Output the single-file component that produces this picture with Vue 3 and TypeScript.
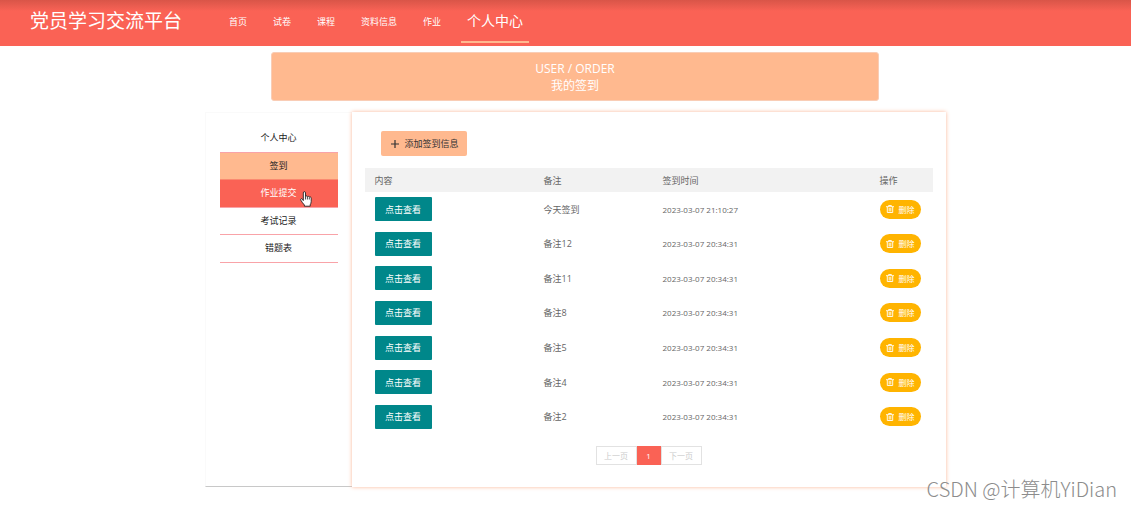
<script setup lang="ts">
import { ref } from 'vue'

interface SignRecord {
  note: string
  time: string
}

const navLinks: string[] = ['首页', '试卷', '课程', '资料信息', '作业', '个人中心']
const activeNav = ref('个人中心')

const menu: string[] = ['个人中心', '签到', '作业提交', '考试记录', '错题表']
const activeMenu = ref('签到')
const hoverMenu = ref('作业提交')

const records = ref<SignRecord[]>([
  { note: '今天签到', time: '2023-03-07 21:10:27' },
  { note: '备注12', time: '2023-03-07 20:34:31' },
  { note: '备注11', time: '2023-03-07 20:34:31' },
  { note: '备注8', time: '2023-03-07 20:34:31' },
  { note: '备注5', time: '2023-03-07 20:34:31' },
  { note: '备注4', time: '2023-03-07 20:34:31' },
  { note: '备注2', time: '2023-03-07 20:34:31' },
])
</script>

<template>
  <div class="page">
    <header class="topbar">
      <div class="brand">党员学习交流平台</div>
      <nav class="topnav">
        <a
          v-for="link in navLinks"
          :key="link"
          href="#"
          :class="{ active: link === activeNav }"
          @click.prevent="activeNav = link"
        >{{ link }}</a>
      </nav>
    </header>

    <div class="content">
      <section class="banner">
        <p>USER / ORDER</p>
        <h1>我的签到</h1>
      </section>

      <div class="columns">
        <aside class="sidebar">
          <nav class="menu">
            <a
              v-for="item in menu"
              :key="item"
              href="#"
              :class="{ active: item === activeMenu, hover: item === hoverMenu }"
              @click.prevent="activeMenu = item"
            >
              {{ item }}
              <svg v-if="item === hoverMenu" class="pointer" viewBox="0 0 12 16" aria-hidden="true">
                <path
                  d="M3.3 9.6V1.9c0-1.7 2.2-1.7 2.2 0v3.6c.3-.9 1.8-.8 1.9.3.4-.8 1.8-.6 1.9.4.6-.6 1.900-.3 1.900.9v3.400c0 1.500-.5 2.300-1 3.300v1.400H4.400v-1.200C3 12.600 1.900 11 .9 9.300.1 7.800 1.600 7 2.400 8.200z"
                  fill="#fff" stroke="#222" stroke-width="0.9" stroke-linejoin="round"
                />
                <path d="M5.5 5.5v3M7.4 6v2.5M9.3 6.5v2" fill="none" stroke="#222" stroke-width="0.8" />
              </svg>
            </a>
          </nav>
        </aside>

        <main class="panel">
          <button class="add" type="button">
            <svg viewBox="0 0 8 8" aria-hidden="true">
              <path d="M4 0v8M0 4h8" stroke="currentColor" stroke-width="1.2" />
            </svg>
            添加签到信息
          </button>

          <table>
            <colgroup>
              <col class="c-content" />
              <col class="c-note" />
              <col class="c-time" />
              <col class="c-action" />
            </colgroup>
            <thead>
              <tr>
                <th>内容</th>
                <th>备注</th>
                <th>签到时间</th>
                <th>操作</th>
              </tr>
            </thead>
            <tbody>
              <tr v-for="(record, index) in records" :key="index">
                <td><button class="view" type="button">点击查看</button></td>
                <td>{{ record.note }}</td>
                <td class="time">{{ record.time }}</td>
                <td>
                  <button class="remove" type="button">
                    <svg viewBox="0 0 8 8" aria-hidden="true">
                      <path
                        d="M0 1.7h8M2.6 1.500V.5h2.800v1M1.300 2v5.500h5.400V2M3.200 3v3.500M4.800 3v3.500"
                        fill="none" stroke="currentColor" stroke-width="0.9"
                      />
                    </svg>
                    删除
                  </button>
                </td>
              </tr>
            </tbody>
          </table>

          <nav class="pager">
            <button type="button" disabled>上一页</button>
            <button class="current" type="button">1</button>
            <button type="button" disabled>下一页</button>
          </nav>
        </main>
      </div>
    </div>

    <div class="watermark">CSDN @计算机YiDian</div>
  </div>
</template>

<style>
body {
  background: #fff;
}
</style>

<style scoped>
.page {
  position: relative;
  min-height: 100vh;
  color: #666;
  font-family: "Open Sans", "Noto Sans CJK SC", sans-serif;
  font-size: 9px;
}

.page * {
  box-sizing: border-box;
}

a {
  color: inherit;
  text-decoration: none;
}

button {
  border: 0;
  padding: 0;
  font: inherit;
  cursor: pointer;
}

.topbar {
  display: flex;
  height: 46px;
  padding-left: 30px;
  background: linear-gradient(#d95548 0, #f05f52 8px, #fa6255 11px);
  color: #fff;
}

.brand {
  width: 186px;
  font-size: 19px;
  line-height: 42px;
  white-space: nowrap;
}

.topnav {
  display: flex;
  white-space: nowrap;
}

.topnav a {
  padding: 0 13px;
  line-height: 44px;
}

.topnav a.active {
  height: 43px;
  margin: 0 7px;
  padding: 0 6px;
  border-bottom: 2px solid #ffb98f;
  font-size: 14px;
  line-height: 41px;
}

.content {
  max-width: 741px;
  margin: 0 auto;
  padding: 6px 0 20px 19px;
  box-sizing: content-box !important;
}

.banner {
  width: 82%;
  margin: 0 auto;
  padding: 7px 0 6px;
  border: 1px solid #f9cdb6;
  border-radius: 3px;
  background: #ffb98f;
  color: #fff;
  text-align: center;
}

.banner p,
.banner h1 {
  margin: 0;
  font-size: 12px;
  font-weight: 400;
  line-height: 17px;
}

.columns {
  display: grid;
  grid-template-columns: 1fr 4fr;
  margin-top: 11px;
}

.sidebar {
  padding: 12px 14px;
  border: 1px solid #fafafa;
  border-right: 0;
  border-bottom-color: #c8c8c8;
}

.menu {
  display: grid;
  grid-auto-rows: 1fr;
  height: 138px;
  color: #222;
  line-height: 26px;
  text-align: center;
}

.menu a {
  position: relative;
  border-bottom: 1px solid #f9a3a8;
}

.menu a.active {
  background: #ffb98f;
  border-color: #fa8a70;
}

.menu a.hover {
  background: #fa6255;
  color: #fff;
}

.pointer {
  position: absolute;
  top: 11px;
  right: 26px;
  width: 12px;
  height: 16px;
}

.panel {
  padding: 19px 13px 22px;
  background: #fff;
  box-shadow: 0 0 4px #fbb697;
}

.add {
  display: flex;
  align-items: center;
  gap: 6px;
  height: 25px;
  margin-left: 16px;
  padding: 0 8px 0 10px;
  border-radius: 2px;
  background: #ffb98f;
  color: #333;
}

.add svg {
  width: 8px;
  height: 8px;
}

table {
  width: 100%;
  height: 266px;
  margin-top: 12px;
  border-collapse: collapse;
  table-layout: fixed;
}

.c-content {
  width: 169px;
}

.c-note {
  width: 119px;
}

.c-time {
  width: 217px;
}

.c-action {
  width: 63px;
}

thead tr {
  height: 24px;
  background: #f2f2f2;
}

th,
td {
  padding: 0 10px;
  font-weight: 400;
  text-align: left;
  vertical-align: middle;
  white-space: nowrap;
}

.time {
  font-size: 8px;
}

.view {
  display: block;
  width: 57px;
  height: 24px;
  border-radius: 1px;
  background: #00878a;
  color: #fff;
}

.remove {
  display: flex;
  align-items: center;
  justify-content: center;
  gap: 5px;
  width: 41px;
  height: 19px;
  border-radius: 10px;
  background: #ffb400;
  color: #fff;
  font-size: 8px;
}

.remove svg {
  width: 8px;
  height: 8px;
}

.pager {
  display: flex;
  justify-content: center;
  margin-top: 12px;
}

.pager button {
  width: 41px;
  height: 19px;
  border: 1px solid #e2e2e2;
  background: #fff;
  color: #ccc;
  font-size: 8px;
}

.pager .current {
  width: 24px;
  border-color: #fa6255;
  background: #fa6255;
  color: #fff;
}

.watermark {
  position: absolute;
  right: 14px;
  bottom: 4px;
  color: #8c8c8c;
  font-family: "Noto Sans CJK SC", sans-serif;
  font-size: 20px;
  font-weight: 300;
  line-height: 30px;
  white-space: nowrap;
}
</style>
